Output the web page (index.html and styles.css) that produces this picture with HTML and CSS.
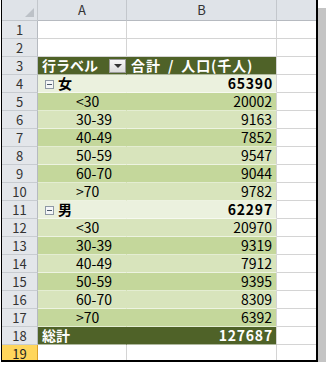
FILE: index.html
```html
<!DOCTYPE html>
<html lang="ja">
<head>
<meta charset="utf-8">
<link rel="stylesheet" href="styles.css">
</head>
<body>
<div class="win">
  <div class="sheet">
    <div class="corner"><span class="tri"></span></div>
    <div class="colhdr">A</div>
    <div class="colhdr">B</div>
    <div class="colhdr last"></div>

    <div class="rowhdr">1</div><div class="cell"></div><div class="cell"></div><div class="cell last"></div>
    <div class="rowhdr">2</div><div class="cell"></div><div class="cell"></div><div class="cell last"></div>

    <div class="rowhdr">3</div>
    <div class="cell pv head a"><span class="lbl">行ラベル</span><span class="dd"><span class="ddtri"></span></span></div>
    <div class="cell pv head b"><span class="lbl">合計 / 人口(千人)</span></div>
    <div class="cell last"></div>

    <div class="rowhdr">4</div>
    <div class="cell pv sub a"><span class="minus"></span><span class="grp">女</span></div>
    <div class="cell pv sub b num">65390</div>
    <div class="cell last"></div>

    <div class="rowhdr">5</div><div class="cell pv dk a item">&lt;30</div><div class="cell pv dk b num">20002</div><div class="cell last"></div>
    <div class="rowhdr">6</div><div class="cell pv lt a item">30-39</div><div class="cell pv lt b num">9163</div><div class="cell last"></div>
    <div class="rowhdr">7</div><div class="cell pv dk a item">40-49</div><div class="cell pv dk b num">7852</div><div class="cell last"></div>
    <div class="rowhdr">8</div><div class="cell pv lt a item">50-59</div><div class="cell pv lt b num">9547</div><div class="cell last"></div>
    <div class="rowhdr">9</div><div class="cell pv dk a item">60-70</div><div class="cell pv dk b num">9044</div><div class="cell last"></div>
    <div class="rowhdr">10</div><div class="cell pv lt a item">&gt;70</div><div class="cell pv lt b num">9782</div><div class="cell last"></div>

    <div class="rowhdr">11</div>
    <div class="cell pv sub a"><span class="minus"></span><span class="grp">男</span></div>
    <div class="cell pv sub b num">62297</div>
    <div class="cell last"></div>

    <div class="rowhdr">12</div><div class="cell pv lt a item">&lt;30</div><div class="cell pv lt b num">20970</div><div class="cell last"></div>
    <div class="rowhdr">13</div><div class="cell pv dk a item">30-39</div><div class="cell pv dk b num">9319</div><div class="cell last"></div>
    <div class="rowhdr">14</div><div class="cell pv lt a item">40-49</div><div class="cell pv lt b num">7912</div><div class="cell last"></div>
    <div class="rowhdr">15</div><div class="cell pv dk a item">50-59</div><div class="cell pv dk b num">9395</div><div class="cell last"></div>
    <div class="rowhdr">16</div><div class="cell pv lt a item">60-70</div><div class="cell pv lt b num">8309</div><div class="cell last"></div>
    <div class="rowhdr">17</div><div class="cell pv dk a item">&gt;70</div><div class="cell pv dk b num">6392</div><div class="cell last"></div>

    <div class="rowhdr">18</div>
    <div class="cell pv total a"><span class="lbl">総計</span></div>
    <div class="cell pv total b num">127687</div>
    <div class="cell last"></div>

    <div class="rowhdr active">19</div><div class="cell"></div><div class="cell"></div><div class="cell last"></div>
  </div>
</div>
</body>
</html>
```

FILE: styles.css
```css
html, body {
  margin: 0;
  padding: 0;
  background: #ffffff;
}

body {
  font-family: "Noto Sans CJK JP", "Noto Sans", sans-serif;
  font-size: 14px;
  color: #000;
}

.win {
  margin-left: 1px;
  width: 314px;
  height: 360px;
  border-left: 1px solid #000;
  border-right: 2px solid #000;
  border-bottom: 2px solid #000;
  box-shadow: 8px 8px 0 0 #c4c4c4;
  overflow: hidden;
  background: #fff;
}

.sheet {
  display: grid;
  grid-template-columns: 36px 89px 150px 1fr;
  grid-template-rows: 21px repeat(19, 18px);
}

.sheet > div {
  box-sizing: border-box;
  border-right: 1px solid #d4d4d4;
  border-bottom: 1px solid #d4d4d4;
  line-height: 17px;
  white-space: nowrap;
}

.sheet > .last {
  border-right: none;
}

.corner {
  background: #dfe3e8;
  border-right-color: #c3c7cc !important;
  border-bottom-color: #c3c7cc !important;
  position: relative;
}

.tri {
  position: absolute;
  right: 3px;
  bottom: 3px;
  width: 0;
  height: 0;
  border-left: 9px solid transparent;
  border-bottom: 9px solid #bcc1c7;
}

.colhdr {
  background: #dfe3e8;
  border-right-color: #c3c7cc !important;
  border-bottom-color: #b6bac0 !important;
  text-align: center;
  font-size: 13px;
  line-height: 20px !important;
  color: #333;
}

.rowhdr {
  background: #e3e6ea;
  border-right-color: #b6bac0 !important;
  border-bottom-color: #c8ccd1 !important;
  text-align: center;
  font-size: 13px;
  color: #333;
}

.rowhdr.active {
  background: #ffd65c;
  border-right-color: #d9a02a !important;
  color: #222;
}

/* pivot table */
.pv {
  border-bottom-color: rgba(255, 255, 255, 0.55) !important;
}

.pv.a {
  border-right-color: transparent !important;
}

.head {
  background: #4f6228;
  color: #fff;
  font-weight: 700;
}

.head.a {
  display: flex;
  align-items: flex-start;
  padding-left: 4px;
}

.head.b {
  padding-left: 4px;
  letter-spacing: 0.9px;
  word-spacing: 3px;
}

.dd {
  margin-left: auto;
  margin-top: 2px;
  width: 17px;
  height: 14px;
  box-sizing: border-box;
  border: 1px solid #9a9a9a;
  background: linear-gradient(#f6f6f6, #dcdcdc);
  display: flex;
  align-items: center;
  justify-content: center;
}

.ddtri {
  width: 0;
  height: 0;
  border-left: 4px solid transparent;
  border-right: 4px solid transparent;
  border-top: 4px solid #333;
}

.sub {
  background: #ebf1de;
  font-weight: 700;
}

.sub.a {
  display: flex;
  align-items: flex-start;
  padding-left: 7px;
}

.minus {
  box-sizing: border-box;
  width: 9px;
  height: 9px;
  margin-top: 5px;
  margin-right: 4px;
  border: 1px solid #8e98a4;
  background: #f4f6f8;
  position: relative;
}

.minus::after {
  content: "";
  position: absolute;
  left: 1px;
  right: 1px;
  top: 3px;
  height: 1px;
  background: #4a5868;
}

.dk {
  background: #c4d79b;
}

.lt {
  background: #d8e4bc;
}

.item {
  padding-left: 38px;
}

.num {
  text-align: right;
  padding-right: 4px;
}

.sub.num {
  letter-spacing: 0.8px;
  padding-right: 3px;
}

.total {
  background: #4f6228;
  color: #fff;
  font-weight: 700;
}

.total.a {
  padding-left: 4px;
}

.total.num {
  letter-spacing: 0.8px;
  padding-right: 3px;
}
```
